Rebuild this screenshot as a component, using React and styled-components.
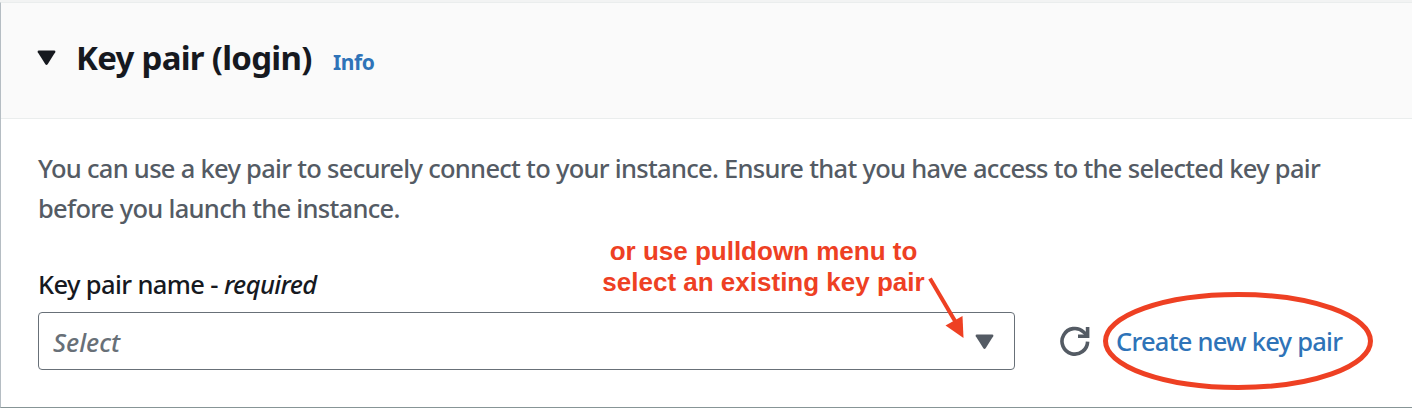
import React from "react";
import styled, { createGlobalStyle } from "styled-components";

const GlobalStyle = createGlobalStyle`
  *, *::before, *::after { box-sizing: border-box; }
  body {
    margin: 0;
    background: #f2f3f3;
    font-family: "Noto Sans", "Open Sans", sans-serif;
    overflow: hidden;
  }
`;

const Panel = styled.section`
  position: relative;
  width: 1412px;
  height: 408px;
  padding-top: 2px;
  display: flex;
  flex-direction: column;
  background: #f2f3f3;
`;

const Card = styled.div`
  flex: 1;
  display: flex;
  flex-direction: column;
  background: #fff;
  border-top: 1px solid #eaeded;
  border-left: 1px solid #b5bdc3;
  border-bottom: 1px solid #879596;
`;

const Header = styled.header`
  height: 116px;
  display: flex;
  align-items: baseline;
  padding: 33px 0 0 36px;
  background: #fafafa;
  border-bottom: 1px solid #eaeded;
`;

const Caret = styled.svg`
  display: block;
  flex: none;
  width: 19px;
  height: 16px;
  fill: ${(p) => p.$color};
`;

const Toggle = styled.span`
  width: 39px;
  display: inline-flex;
  align-self: flex-start;
  padding-top: 14px;
`;

const Title = styled.h2`
  margin: 0;
  width: 257px;
  font-size: 33px;
  line-height: 44px;
  font-weight: 700;
  letter-spacing: -0.72px;
  white-space: nowrap;
  color: #16191f;
`;

const InfoLink = styled.a`
  font-size: 21px;
  font-weight: 700;
  letter-spacing: -0.4px;
  color: #2e73b8;
`;

const Body = styled.div`
  padding: 29px 0 0 37px;
`;

const Description = styled.p`
  margin: 0;
  font-size: 25.5px;
  line-height: 40px;
  font-weight: 500;
  letter-spacing: -0.71px;
  white-space: nowrap;
  color: #545b64;
`;

const Label = styled.label`
  display: block;
  margin-top: 37px;
  font-size: 25.5px;
  line-height: 38px;
  font-weight: 500;
  letter-spacing: -0.62px;
  color: #16191f;
`;

const Row = styled.div`
  display: flex;
  align-items: center;
  margin-top: 9px;
`;

const Select = styled.div`
  width: 977px;
  height: 58px;
  display: flex;
  align-items: center;
  justify-content: space-between;
  padding: 1px 20px 0 14px;
  border: 1px solid #687078;
  border-radius: 4px;
  background: #fff;
`;

const Placeholder = styled.span`
  font-size: 25.5px;
  line-height: 38px;
  font-style: italic;
  font-weight: 500;
  letter-spacing: 0;
  color: #687078;
`;

const Refresh = styled.svg`
  display: block;
  margin-left: 44px;
  width: 32px;
  height: 32px;
  fill: none;
  stroke: #545b64;
  stroke-width: 3.6;
`;

const CreateLink = styled.a`
  margin-left: 25px;
  font-size: 25.5px;
  line-height: 38px;
  font-weight: 500;
  letter-spacing: -0.76px;
  white-space: nowrap;
  color: #2e73b8;
`;

const Note = styled.div`
  position: absolute;
  left: 593px;
  top: 236px;
  width: 341px;
  font: 700 26px/31px "Liberation Sans", Arial, sans-serif;
  text-align: center;
  white-space: nowrap;
  color: #ee4023;
`;

const Markup = styled.svg`
  position: absolute;
  left: 0;
  top: 0;
  pointer-events: none;
`;

function Triangle({ color }) {
  return (
    <Caret $color={color} viewBox="0 0 19 16">
      <path d="M1.6 0.5H17.4Q19 0.8 18.2 2.3L10.8 14Q9.5 16 8.2 14L0.8 2.3Q0 0.8 1.6 0.5Z" />
    </Caret>
  );
}

export default function App() {
  return (
    <>
      <GlobalStyle />
      <Panel>
        <Card>
          <Header>
            <Toggle><Triangle color="#16191f" /></Toggle>
            <Title>Key pair (login)</Title>
            <InfoLink>Info</InfoLink>
          </Header>
          <Body>
            <Description>
              You can use a key pair to securely connect to your instance. Ensure that you have access to the selected key pair
              <br />
              before you launch the instance.
            </Description>
            <Label>Key pair name - <em>required</em></Label>
            <Row>
              <Select>
                <Placeholder>Select</Placeholder>
                <Triangle color="#545b64" />
              </Select>
              <Refresh viewBox="0 0 32 32">
                <path d="M28.6 16.6A12.8 12.8 0 1 1 24.6 7L27.5 9.8" />
                <path d="M28.6 2V11.3H19" />
              </Refresh>
              <CreateLink>Create new key pair</CreateLink>
            </Row>
          </Body>
        </Card>
        <Note>
          or use pulldown menu to
          <br />
          select an existing key pair
        </Note>
        <Markup width="1412" height="408" viewBox="0 0 1412 408">
          <path d="M930 278.5L955 321" fill="none" stroke="#ee4023" strokeWidth="4" />
          <path d="M963.5 338L945.5 325.5L962.5 316Z" fill="#ee4023" />
          <ellipse cx="1238" cy="341" rx="132.5" ry="46.5" fill="none" stroke="#ee4023" strokeWidth="5" />
        </Markup>
      </Panel>
    </>
  );
}
